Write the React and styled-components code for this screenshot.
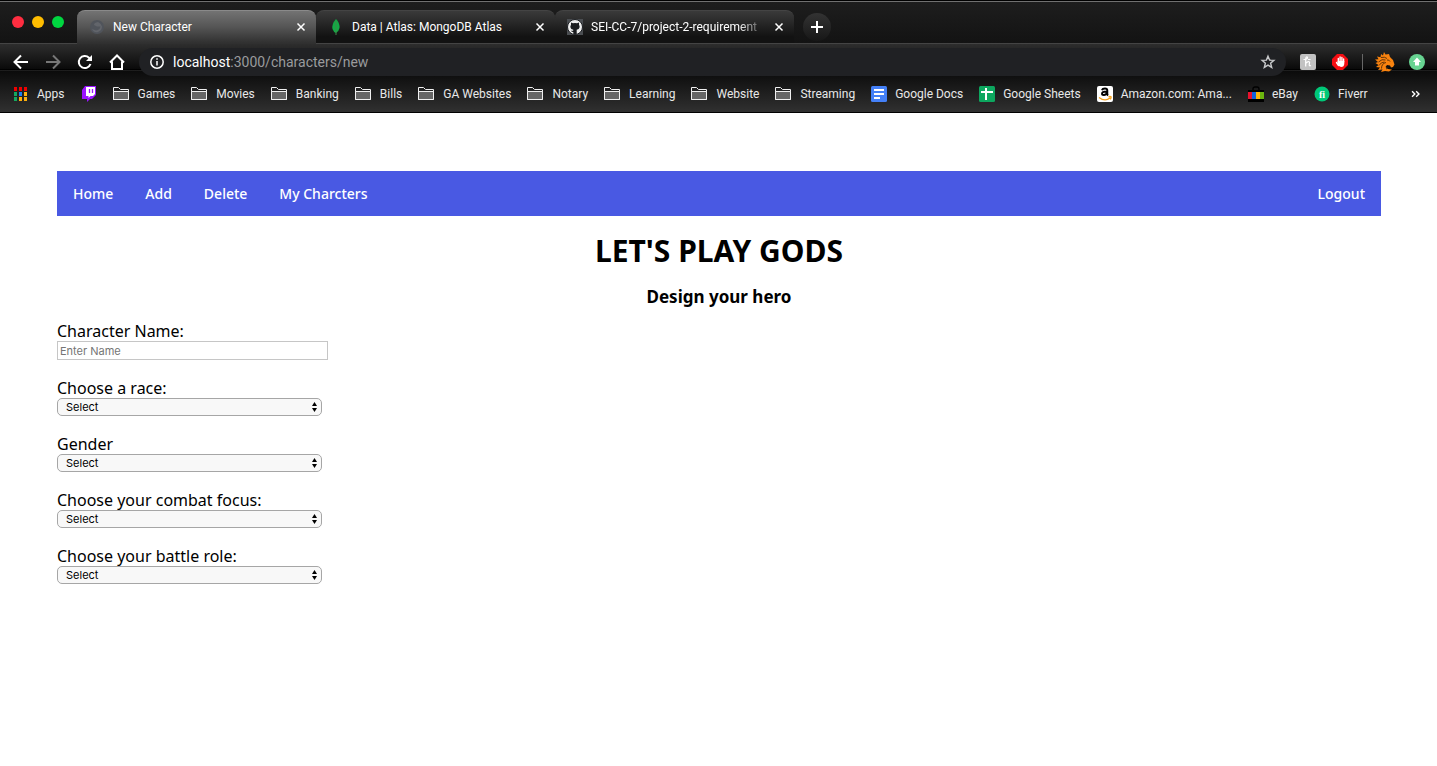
import React from "react";
import styled, { createGlobalStyle } from "styled-components";

const GlobalStyle = createGlobalStyle`
  * { box-sizing: border-box; }
  body { margin: 0; background: #fff; }
`;

const chrome = `Roboto, "Liberation Sans", sans-serif`;
const control = `Inter, "Liberation Sans", sans-serif`;
const page = `"Lucida Grande", "Noto Sans", sans-serif`;

const Browser = styled.header`
  font-family: ${chrome};
  font-size: 12px;
  color: #e8e8e8;
  border-bottom: 1px solid #000;
  background: linear-gradient(#2f2f2f, #0a0a0a 26px, #000 26px, #000 27px, #303030 27px, #0b0b0b 28px, #303030) 0 43px / 100% 69px no-repeat, #161616;
`;

const TabStrip = styled.div`
  display: flex;
  align-items: flex-end;
  height: 44px;
  padding-left: 12px;
  border-top: 1px solid #000;
  box-shadow: inset 0 1px #707070;
  background: linear-gradient(#1e1e1e, #131313);
  border-bottom: 1px solid #444;
`;

const Lights = styled.div`
  display: flex;
  gap: 8px;
  width: 65px;
  align-self: center;
`;

const Light = styled.button`
  width: 12px;
  height: 12px;
  padding: 0;
  border: 0;
  border-radius: 50%;
  background: ${(p) => p.$color};
`;

const Tab = styled.div`
  display: flex;
  align-items: center;
  width: 239px;
  height: 34px;
  margin-bottom: -1px;
  padding: 0 8px 0 12px;
  border-radius: 8px 8px 0 0;
  color: #fff;
  background: ${(p) => (p.$active ? "linear-gradient(#737373, #555 50%, #303030)" : "linear-gradient(#3a3a3a, #121212 80%)")};
  border-top: 1px solid ${(p) => (p.$active ? "#8a8a8a" : "#444")};
  border-bottom: 1px solid ${(p) => (p.$active ? "#303030" : "#444")};
`;

const TabTitle = styled.span`
  flex: 1;
  min-width: 0;
  margin-left: 8px;
  overflow: hidden;
  white-space: nowrap;
  mask-image: ${(p) => (p.$fade ? "linear-gradient(90deg, #000 84%, transparent)" : "none")};
`;

const IconButton = styled.button`
  display: flex;
  align-items: center;
  justify-content: center;
  flex: none;
  width: ${(p) => p.$size || 16}px;
  height: ${(p) => p.$size || 16}px;
  padding: 0;
  border: 0;
  color: ${(p) => p.$color || "#fff"};
  background: none;
`;

const Close = styled(IconButton)`
  width: 14px;
  margin-left: 6px;
`;

const NewTab = styled(IconButton)`
  margin: 0 0 2px 9px;
  border-radius: 50%;
  background: linear-gradient(#333, #171717);
`;

const Toolbar = styled.div`
  display: flex;
  align-items: center;
  height: 36px;
  padding: 0 12px 0 11px;
`;

const NavButtons = styled.div`
  display: flex;
  gap: 12px;
  margin-right: 12px;
`;

const Omnibox = styled.div`
  display: flex;
  align-items: center;
  flex: 1;
  height: 28px;
  padding: 0 10px;
  border-radius: 14px;
  background: #202124;
  font-size: 14px;
`;

const Address = styled.div`
  flex: 1;
  margin-left: 8px;
  color: #9a9b9d;
  b { color: #fff; font-weight: 400; }
`;

const Extensions = styled.div`
  display: flex;
  align-items: center;
  margin-left: 14px;
`;

const ExtGap = styled.div`
  display: flex;
  align-items: center;
  gap: ${(p) => p.$gap}px;
`;

const Divider = styled.span`
  width: 1px;
  height: 16px;
  margin: 0 12px 0 14px;
  background: #666;
`;

const Bookmarks = styled.nav`
  display: flex;
  align-items: center;
  height: 32px;
  padding: 0 16px 4px 12px;
`;

const Bookmark = styled.a`
  display: flex;
  align-items: center;
  gap: 8px;
  margin-right: 16px;
  color: #e8e8e8;
  text-decoration: none;
  white-space: nowrap;
  svg { flex: none; }
`;

const More = styled(IconButton)`
  margin-left: auto;
  width: 11px;
`;

const Page = styled.main`
  padding: 58px 56px 58px 57px;
  font-family: ${page};
  font-size: 16px;
  line-height: 20px;
  color: #000;
`;

const SiteNav = styled.nav`
  display: flex;
  align-items: center;
  gap: 32px;
  height: 45px;
  padding: 0 16px;
  background: #4959e3;
  font-size: 14px;
`;

const NavLink = styled.a`
  color: #fff;
  font-weight: 500;
  text-decoration: none;
  margin-left: ${(p) => (p.$end ? "auto" : "0")};
`;

const Title = styled.h1`
  margin: 15px 0 16px;
  font-size: 30px;
  line-height: 40px;
  text-align: center;
`;

const Subtitle = styled.h2`
  margin: 0 0 14px;
  font-size: 17px;
  line-height: 20px;
  text-align: center;
`;

const Form = styled.form`
  display: grid;
  gap: 18px;
  justify-items: start;
`;

const Field = styled.div`
  display: flex;
  flex-direction: column;
  align-items: flex-start;
`;

const TextBox = styled.input`
  width: 271px;
  height: 19px;
  padding: 0 2px;
  border: 1px solid #c6c6c6;
  font: 11px ${control};
  &::placeholder { color: #757575; }
`;

const SelectShell = styled.div`
  display: flex;
  align-items: center;
  position: relative;
  svg { position: absolute; right: 4px; pointer-events: none; }
`;

const Select = styled.select`
  appearance: none;
  width: 265px;
  height: 18px;
  padding: 0 8px;
  border: 1px solid #a6a6a6;
  border-radius: 5px;
  background: #f8f8f8;
  color: #000;
  font: 11px ${control};
`;

const Line = ({ d, size = 16, width = 2 }) => (
  <svg width={size} height={size} viewBox="0 0 16 16" fill="none" stroke="currentColor" strokeWidth={width}>
    <path d={d} />
  </svg>
);

const CloseIcon = () => <Line d="M4 4l8 8M12 4l-8 8" width={1.7} />;

const Folder = () => (
  <svg width="17" height="16" stroke="#f0f0f0" fill="#666">
    <path d="M.5 13.500v-12h5l2 2h8v10z" fill="#222" />
    <path d="M.5 5.500h15v8H.5z" />
  </svg>
);

const AppsIcon = () => {
  const colors = ["#f00000", "#f00000", "#f00000", "#12a960", "#1d7df2", "#fdaf0c", "#12a960", "#fdaf0c", "#fdaf0c"];
  return (
    <svg width="17" height="16">
      {colors.map((c, i) => (
        <rect key={i} x={2 + (i % 3) * 5} y={1 + Math.floor(i / 3) * 5} width="3" height="4" fill={c} />
      ))}
    </svg>
  );
};

const Twitch = () => (
  <svg width="16" height="16" viewBox="0 0 16 16">
    <path d="M1 4L4 0h11v9l-4 4H9l-3 3v-3H1z" fill="#9b12ff" />
    <path d="M5 1h9v7l-2 2H9.500l-2 2v-2H5z" fill="#fff" />
    <path d="M8.500 3v4M11.500 3v4" stroke="#9b12ff" strokeWidth="1.300" />
  </svg>
);

const Docs = () => (
  <svg width="16" height="16">
    <rect width="16" height="16" rx="1.500" fill="#4480f7" />
    <path d="M3 4h10M3 8h10M3 12h6" stroke="#fff" strokeWidth="2" />
  </svg>
);

const Sheets = () => (
  <svg width="16" height="16">
    <rect width="16" height="16" rx="1.500" fill="#0da75f" />
    <path d="M2 6h12M7 2v12" stroke="#fff" strokeWidth="2" />
  </svg>
);

const Amazon = () => (
  <svg width="16" height="16">
    <rect width="16" height="16" rx="2" fill="#fff" />
    <path d="M5 4.300Q5.500 2.500 8 2.500Q10.300 2.500 10.300 4.500v3.500q0 .8.800 1.500M10 5.500Q5 5.500 5 7.700Q5 9 6.800 9Q9.500 9 10 6" fill="none" stroke="#000" strokeWidth="1.900" />
    <path d="M2 11.500Q8 16 13 12M11.500 10.800q2-.5 2.500 0q.2 1-.8 2.500" fill="none" stroke="#f5a11a" strokeWidth="1.400" />
  </svg>
);

const Ebay = () => (
  <svg width="16" height="16">
    <path d="M5 5V3q0-2 2-2h2q2 0 2 2v2" fill="none" stroke="#000" strokeWidth="1.300" />
    <path d="M0 4h16v12H0z" fill="#000" />
    <path d="M0 6h4v7H0z" fill="#e8112d" />
    <path d="M4 6h4v7H4z" fill="#1261dc" />
    <path d="M8 6h4v7H8z" fill="#fbb40c" />
    <path d="M12 6h4v7h-4z" fill="#6cb50e" />
  </svg>
);

const Fiverr = () => (
  <svg width="16" height="16">
    <circle cx="8" cy="8" r="7.500" fill="#00c878" />
    <text x="8" y="12" textAnchor="middle" fill="#fff" fontSize="10" fontWeight="700" fontFamily="Liberation Serif, serif">fi</text>
  </svg>
);

const Globe = () => (
  <svg width="16" height="16">
    <circle cx="8" cy="8" r="7" fill="#50545b" />
    <path d="M9 3Q5 3.500 5 6l3 1.500 3.500 0Q11 11 7 11.500L3 10Q5 14 9 13q4-1.500 4-5.500Q12 4 9 3z" fill="#62656b" />
  </svg>
);

const Leaf = () => (
  <svg width="16" height="16">
    <path d="M8 0Q3.500 5 4.500 10q1 3 3.500 4q3-2 3.500-5Q12 4 8 0z" fill="#13aa45" />
    <path d="M8 2v14" stroke="#3c8a48" />
  </svg>
);

const Github = () => (
  <svg width="16" height="16" viewBox="0 0 16 16">
    <rect width="16" height="16" fill="#4b4e52" />
    <circle cx="8" cy="8" r="7.500" fill="#eee" stroke="#1b1d20" />
    <path d="M4 3.500l2 .8q2-.6 4 0l2-.8v2.500q.8 1 .6 2.200q-.4 2.300-2.900 2.600v4.200H6.300V13q-1.800 0-2.500-1.500 1.300.8 2.500 0v-.7q-2.600-.3-2.900-2.600-.2-1.200.6-2.200z" fill="#1b1d20" />
  </svg>
);

const Honey = () => (
  <svg width="16" height="16">
    <rect width="16" height="16" rx="2" fill="#c2c2c2" />
    <path d="M3.500 5.500Q8 5.500 7.500 3.300Q6 2 5.700 5V12.500M5.700 9.500Q7.500 7 9.200 7.700Q10 8.200 9.300 10Q8.800 12.500 11 11.500M8 5.500h2.500" fill="none" stroke="#fff" strokeWidth="1.200" />
  </svg>
);

const Adblock = () => (
  <svg width="16" height="16">
    <path d="M5 0h6l5 5v6l-5 5H5l-5-5V5z" fill="#f40d12" />
    <path d="M6.300 8V4.500M8.100 8V3M9.900 8V3.500M11.600 8V5M4.500 8.500l2 3" stroke="#fff" strokeWidth="1.400" strokeLinecap="round" />
    <path d="M5.600 7h6.700v2.500q0 3.500-3.300 3.500Q7 13 5.600 10z" fill="#fff" />
  </svg>
);

const Griffin = () => (
  <svg width="20" height="20" viewBox="0 0 20 20">
    <path d="M9 0l1.500 2.500L14 2l1 3 3 3 1.500 4.500L18 15l-2 .5-1-2-3-.5-1.500 2L13 17l4 .5L14 19.500l-4-.5-4 1 1.500-2.500L3 18l2-2.500L1 15l2.500-2L.5 11 3 10 0 7.500l3.500-.2L2 4.500l3.500.8L6 2l2 1.500z" fill="#f9830f" />
    <path d="M3.500 10Q7 6.500 10.500 8M4 13.500Q6 10 9.500 10M6.500 16.500Q6.500 11.500 11 10.500M6 5.500q4-1 6 1M12 8q2-.5 3 1.500M13.500 15.500L11 17" fill="none" stroke="#3c2006" strokeWidth=".8" />
  </svg>
);

const Update = () => (
  <svg width="16" height="16">
    <circle cx="8" cy="8" r="8" fill="#67d391" />
    <path d="M8 3.500l4 4.500H10v3.500H6V8H4z" fill="#fff" />
  </svg>
);

const Info = () => (
  <svg width="16" height="16" fill="none" stroke="#fff" strokeWidth="1.500">
    <circle cx="8" cy="8" r="6.200" />
    <path d="M8 7v4.500M8 4.200v1.600" />
  </svg>
);

const Star = () => (
  <svg width="16" height="16" fill="none" stroke="#c8c9cb" strokeWidth="1.400">
    <path d="M8 2.200l1.600 3.900 4.300.3-3.300 2.800 1.100 4.200L8 11.100l-3.700 2.300 1.100-4.200-3.300-2.800 4.300-.3z" />
  </svg>
);

const Reload = () => (
  <svg width="16" height="16" fill="none" stroke="#fff" strokeWidth="2">
    <path d="M13.500 10A6 6 0 1 1 12 3.700l1 1" />
    <path d="M15 1v6H9z" fill="#fff" stroke="none" />
  </svg>
);

const Arrows = () => (
  <svg width="7" height="12">
    <path d="M1 5l2.500-4L6 5zM1 7l2.500 4L6 7z" fill="#000" />
  </svg>
);

const tabs = [
  { title: "New Character", icon: <Globe />, active: true },
  { title: "Data | Atlas: MongoDB Atlas", icon: <Leaf /> },
  { title: "SEI-CC-7/project-2-requirement", icon: <Github />, fade: true },
];

const bookmarks = [
  ["Apps", <AppsIcon />],
  ["", <Twitch />],
  ["Games"], ["Movies"], ["Banking"], ["Bills"], ["GA Websites"],
  ["Notary"], ["Learning"], ["Website"], ["Streaming"],
  ["Google Docs", <Docs />],
  ["Google Sheets", <Sheets />],
  ["Amazon.com: Ama...", <Amazon />],
  ["eBay", <Ebay />],
  ["Fiverr", <Fiverr />],
];

const selects = [
  ["race", "Choose a race:"],
  ["gender", "Gender"],
  ["combat", "Choose your combat focus:"],
  ["role", "Choose your battle role:"],
];

export default function App() {
  return (
    <>
      <GlobalStyle />
      <Browser>
        <TabStrip>
          <Lights>
            <Light $color="#ff2d40" aria-label="Close window" />
            <Light $color="#ffbd00" aria-label="Minimize window" />
            <Light $color="#00d640" aria-label="Zoom window" />
          </Lights>
          {tabs.map((t) => (
            <Tab key={t.title} $active={t.active}>
              {t.icon}
              <TabTitle $fade={t.fade}>{t.title}</TabTitle>
              <Close aria-label="Close tab"><CloseIcon /></Close>
            </Tab>
          ))}
          <NewTab $size={28} aria-label="New tab"><Line d="M8 2v12M2 8h12" /></NewTab>
        </TabStrip>
        <Toolbar>
          <NavButtons>
            <IconButton $size={20} aria-label="Back"><Line d="M15 8H2M8 1.500L1.500 8 8 14.500" /></IconButton>
            <IconButton $size={20} $color="#777" aria-label="Forward"><Line d="M1 8h13M8 1.500L14.500 8 8 14.500" /></IconButton>
            <IconButton $size={20} aria-label="Reload"><Reload /></IconButton>
            <IconButton $size={20} aria-label="Home"><Line d="M1 8.500L8 1.500l7 7M3 7.500V15h10V7.500" /></IconButton>
          </NavButtons>
          <Omnibox>
            <Info />
            <Address><b>localhost</b>:3000/characters/new</Address>
            <IconButton aria-label="Bookmark this page"><Star /></IconButton>
          </Omnibox>
          <Extensions>
            <ExtGap $gap={16}>
              <IconButton aria-label="Honey"><Honey /></IconButton>
              <IconButton aria-label="Ad blocker"><Adblock /></IconButton>
            </ExtGap>
            <Divider />
            <ExtGap $gap={14}>
              <IconButton $size={20} aria-label="Profile"><Griffin /></IconButton>
              <IconButton aria-label="Update"><Update /></IconButton>
            </ExtGap>
          </Extensions>
        </Toolbar>
        <Bookmarks>
          {bookmarks.map(([name, icon]) => (
            <Bookmark key={name} href="#" aria-label={name || "Twitch"}>
              {icon || <Folder />}
              {name}
            </Bookmark>
          ))}
          <More aria-label="More bookmarks"><Line d="M3 4l4 4-4 4M9 4l4 4-4 4" /></More>
        </Bookmarks>
      </Browser>
      <Page>
        <SiteNav>
          <NavLink href="#">Home</NavLink>
          <NavLink href="#">Add</NavLink>
          <NavLink href="#">Delete</NavLink>
          <NavLink href="#">My Charcters</NavLink>
          <NavLink href="#" $end>Logout</NavLink>
        </SiteNav>
        <Title>LET'S PLAY GODS</Title>
        <Subtitle>Design your hero</Subtitle>
        <Form>
          <Field>
            <label htmlFor="name">Character Name:</label>
            <TextBox id="name" placeholder="Enter Name" />
          </Field>
          {selects.map(([id, label]) => (
            <Field key={id}>
              <label htmlFor={id}>{label}</label>
              <SelectShell>
                <Select id={id}><option>Select</option></Select>
                <Arrows />
              </SelectShell>
            </Field>
          ))}
        </Form>
      </Page>
    </>
  );
}
